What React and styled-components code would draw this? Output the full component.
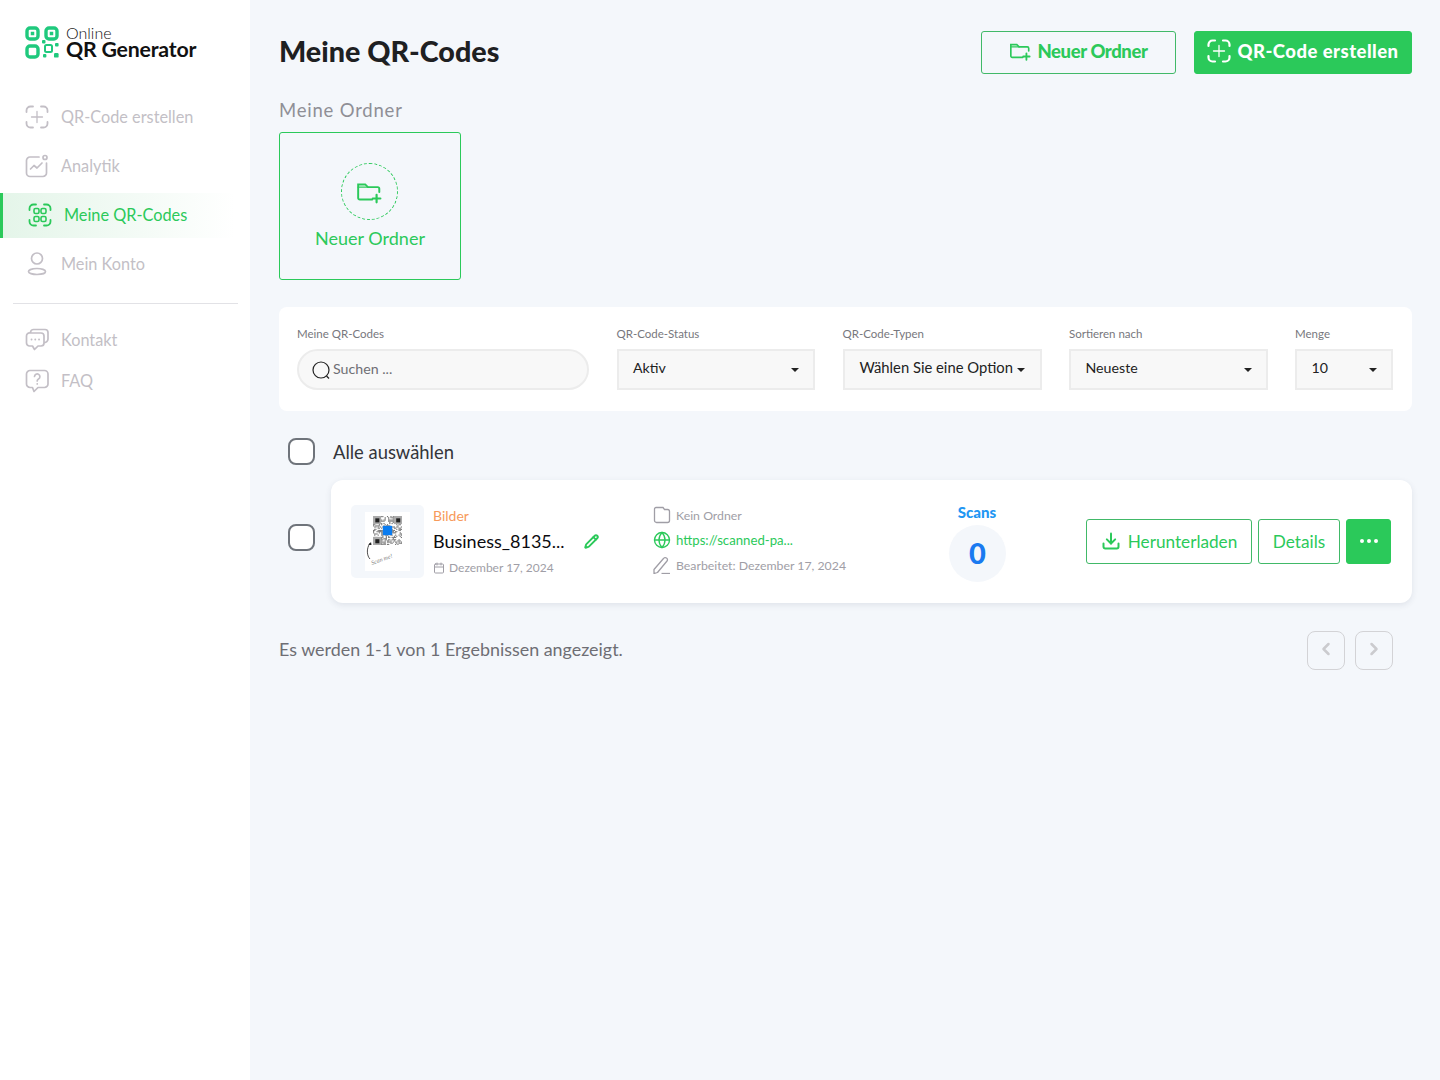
import React from 'react'
import styled, { createGlobalStyle } from 'styled-components'
import { Globe, Download, Pencil, Calendar, MoreHorizontal, ChevronLeft, ChevronRight } from 'lucide-react'

const green = '#2bc95a'
const muted = '#c3bfc6'

const Global = createGlobalStyle`
  html, body { margin: 0; padding: 0; background: #f4f7fb; }
  body { font-family: "Lato", "Noto Sans", sans-serif; }
  * { box-sizing: border-box; }
`

const Page = styled.div`
  display: flex;
  min-height: 1080px;
`
const Sidebar = styled.aside`
  width: 250px;
  flex-shrink: 0;
  background: #fff;
  padding-top: 24px;
`
const LogoRow = styled.div`
  display: flex;
  align-items: center;
  gap: 7px;
  padding-left: 25px;
  height: 36px;
  margin-bottom: 35px;
`
const LogoText = styled.div`
  display: flex;
  flex-direction: column;
  color: #111;
  span:first-child { font-size: 16px; line-height: 13px; font-weight: 300; }
  span:last-child { font-size: 21.3px; line-height: 18px; margin-top: 1px; font-weight: 700; letter-spacing: -0.2px; white-space: nowrap; }
`
const NavItem = styled.div`
  display: flex;
  align-items: center;
  height: 45px;
  margin-bottom: ${p => p.$tight ? '-4px' : '4px'};
  width: ${p => p.$active ? '235px' : '100%'};
  gap: 12px;
  padding-left: 25px;
  padding-bottom: ${p => p.$tight ? '0' : '2px'};
  font-size: 16.3px;
  color: ${p => p.$active ? green : muted};
  border-left: ${p => p.$active ? `3px solid ${green}` : 'none'};
  background: ${p => p.$active ? 'linear-gradient(90deg, #e4f5e9, #ffffff)' : 'transparent'};
`
const Divider = styled.hr`
  border: none;
  border-top: 1px solid #e2e2e6;
  margin: 16px 12px 13px 13px;
`
const Main = styled.main`
  flex: 1;
  padding: 31px 28px 0 29px;
  min-width: 0;
`
const Header = styled.header`
  display: flex;
  align-items: center;
  height: 43px;
  gap: 18px;
`
const Title = styled.h1`
  margin: 0 auto 4px 0;
  font-size: 28.7px;
  font-weight: 900;
  color: #1e2022;
`
const HeadButton = styled.button`
  display: flex;
  align-items: center;
  justify-content: center;
  gap: 6px;
  height: 43px;
  width: ${p => p.$w}px;
  padding: 0 0 3px;
  font: 900 18.5px "Lato", sans-serif;
  letter-spacing: ${p => p.$solid ? '0.47px' : '-0.4px'};
  border-radius: 3px;
  border: 1px solid ${p => p.$solid ? green : '#41b968'};
  background: ${p => p.$solid ? green : 'transparent'};
  color: ${p => p.$solid ? '#fff' : green};
`
const SectionTitle = styled.div`
  margin-top: 24px;
  font-size: 18.5px;
  letter-spacing: 0.8px;
  color: #8f8f96;
  line-height: 24px;
`
const FolderCard = styled.div`
  margin-top: 10px;
  width: 182px;
  height: 148px;
  border: 1px solid ${green};
  border-radius: 3px;
  display: flex;
  flex-direction: column;
  align-items: center;
  padding-top: 30px;
  color: ${green};
  font-size: 18px;
`
const DashedCircle = styled.div`
  width: 57px;
  height: 57px;
  margin-left: -2px;
  border-radius: 50%;
  border: 1px dashed ${green};
  display: flex;
  align-items: center;
  justify-content: center;
  margin-bottom: 7px;
`
const FilterPanel = styled.section`
  margin-top: 27px;
  height: 104px;
  background: #fff;
  border-radius: 8px;
  padding: 18px 0 0 18px;
  display: flex;
  gap: 27.5px;
`
const Field = styled.div`
  width: ${p => p.$w}px;
  flex-shrink: 0;
`
const FieldLabel = styled.div`
  font-size: 11.5px;
  line-height: 18px;
  height: 24px;
  color: #77777d;
`
const SearchBox = styled.div`
  height: 41px;
  border: 2px solid #ececec;
  border-radius: 21px;
  background: #f8f8f8;
  display: flex;
  align-items: center;
  gap: 2px;
  padding: 0 0 0 12px;
  font-size: 14.2px;
  color: #6f6f75;
`
const SearchLabel = styled.span`
  margin-top: -2px;
`
const SelectBox = styled.div`
  height: 41px;
  border: 2px solid #ececec;
  background: #f8f8f8;
  display: flex;
  align-items: center;
  justify-content: ${p => p.$tight ? 'flex-start' : 'space-between'};
  gap: 4px;
  padding: 0 ${p => p.$tight ? '0' : '14px'} 5px ${p => p.$tight ? '15px' : '14.5px'};
  font-size: ${p => p.$tight ? '14.8px' : '14.2px'};
  color: #222;
  white-space: nowrap;
`
const Caret = styled.i`
  display: block;
  width: 0;
  height: 0;
  margin-top: 6px;
  border-left: 4px solid transparent;
  border-right: 4px solid transparent;
  border-top: 4px solid #222;
`
const Check = styled.div`
  width: 27px;
  height: 27px;
  flex-shrink: 0;
  margin-bottom: ${p => p.$lift ? '8px' : '0'};
  border: 2px solid #6f747b;
  border-radius: 8px;
  background: #fff;
`
const SelectRow = styled.div`
  margin-top: 27px;
  padding-left: 9px;
  display: flex;
  align-items: center;
  gap: 18px;
  height: 27px;
  font-size: 18.4px;
  color: #33353a;
`
const Row = styled.div`
  margin-top: 15px;
  display: flex;
  align-items: center;
  padding-left: 9px;
  gap: 16px;
`
const QrCard = styled.article`
  flex: 1;
  height: 123px;
  background: #fff;
  border-radius: 12px;
  box-shadow: 0 2px 6px rgba(40, 50, 80, 0.1);
  display: flex;
  align-items: center;
  padding: 0 21px 0 20px;
`
const Thumb = styled.div`
  width: 73px;
  height: 73px;
  border-radius: 5px;
  background: #f4f7fb;
  display: flex;
  justify-content: center;
  align-items: center;
  flex-shrink: 0;
`
const Info = styled.div`
  width: 220px;
  margin: 0 0 1px 9px;
  flex-shrink: 0;
`
const Kind = styled.div`
  font-size: 14px;
  line-height: 18px;
  color: #f79a5b;
`
const NameRow = styled.div`
  display: flex;
  align-items: center;
  gap: 19px;
  margin-top: 4px;
  font-size: 18px;
  line-height: 24px;
  color: #0b0b0f;
`
const DateRow = styled.div`
  display: flex;
  align-items: center;
  gap: 4px;
  margin-top: 7px;
  font-size: 12px;
  color: #a09ea6;
`
const Meta = styled.div`
  width: 270px;
  flex-shrink: 0;
  display: flex;
  flex-direction: column;
  gap: 7px;
  margin-top: -3px;
`
const MetaLine = styled.div`
  display: flex;
  align-items: center;
  gap: 5px;
  height: 18px;
  font-size: ${p => p.$link ? '13.2px' : '12.3px'};
  color: ${p => p.$link ? green : '#a09ea6'};
`
const Scans = styled.div`
  width: 108px;
  flex-shrink: 0;
  display: flex;
  flex-direction: column;
  align-items: center;
  gap: 4px;
  margin-top: 1px;
  font-size: 15px;
  font-weight: 900;
  color: #2196f3;
`
const ScanCount = styled.div`
  width: 57px;
  height: 57px;
  border-radius: 50%;
  background: #f4f7fb;
  display: flex;
  align-items: center;
  justify-content: center;
  padding: 0 0 2px 1px;
  font-size: 29px;
  color: #1a7af0;
`
const Actions = styled.div`
  margin-left: auto;
  display: flex;
  gap: 6px;
`
const ActionButton = styled.button`
  height: 45px;
  width: ${p => p.$w}px;
  padding: 0 0 1px;
  display: flex;
  align-items: center;
  justify-content: center;
  gap: 7px;
  font: 400 17.2px "Lato", sans-serif;
  color: ${p => p.$solid ? '#fff' : green};
  border: 1px solid ${p => p.$solid ? green : '#41b968'};
  background: ${p => p.$solid ? green : '#fff'};
  border-radius: 3px;
`
const Footer = styled.div`
  margin-top: 28px;
  display: flex;
  align-items: center;
  justify-content: space-between;
  padding-right: 19px;
  height: 39px;
  font-size: 17.9px;
  color: #6e6e74;
`
const FooterText = styled.span`
  margin-top: -4px;
`
const Pager = styled.div`
  display: flex;
  gap: 10px;
`
const PageButton = styled.button`
  width: 38px;
  height: 39px;
  padding: 0 0 3px;
  border: 1px solid #d3d3d6;
  border-radius: 8px;
  background: transparent;
  color: #cbcbce;
  display: flex;
  align-items: center;
  justify-content: center;
`

const Logo = () => (
  <svg width="34" height="33" viewBox="0 0 34 33" fill="none" stroke="#1fc97d">
    <rect x="2" y="2" width="11" height="11" rx="3" strokeWidth="3.4" />
    <rect x="21" y="2" width="11" height="11" rx="3" strokeWidth="3.4" />
    <rect x="2" y="20" width="11" height="11" rx="3" strokeWidth="3.4" />
    <rect x="6" y="6" width="3" height="3" fill="#1fc97d" strokeWidth="0.5" />
    <rect x="25" y="6" width="3" height="3" fill="#1fc97d" strokeWidth="0.5" />
    <rect x="17" y="14" width="3.5" height="3.5" rx="1" fill="#1fc97d" stroke="none" />
    <rect x="20" y="19" width="7" height="7" rx="1.5" strokeWidth="2" />
    <rect x="30" y="17" width="3.6" height="3.6" rx="1" fill="#1fc97d" stroke="none" />
    <rect x="29" y="27" width="4.6" height="4.6" rx="1.2" fill="#1fc97d" stroke="none" />
    <rect x="18" y="28" width="3.4" height="3.4" rx="1" fill="#1fc97d" stroke="none" />
  </svg>
)
const Brackets = ({ sw = 1.8 }) => (
  <path strokeWidth={sw} strokeLinecap="round" d="M1.500 7V5.500A4 4 0 0 1 5.500 1.500H8M16 1.500H18.500A4 4 0 0 1 22.500 5.500V7M22.500 17V18.500A4 4 0 0 1 18.500 22.500H16M8 22.500H5.500A4 4 0 0 1 1.500 18.500V17" />
)
const CreateIcon = ({ color = muted, size = 24 }) => (
  <svg width={size} height={size} viewBox="0 0 24 24" fill="none" stroke={color}>
    <Brackets sw={color === '#fff' ? 2.2 : 1.8} />
    <path strokeWidth="1.300" strokeLinecap="round" d="M12 6.500V17.500M6.500 12H17.500" />
  </svg>
)
const ChartIcon = () => (
  <svg width="24" height="24" viewBox="0 0 24 24" fill="none" stroke={muted} strokeWidth="1.700" strokeLinecap="round" strokeLinejoin="round">
    <path d="M14 3H5A3.500 3.500 0 0 0 1.500 6.500V19A3.500 3.500 0 0 0 5 22.500H18A3.500 3.500 0 0 0 21.500 19V9" />
    <circle cx="20" cy="3.500" r="2" />
    <path d="M5.500 15L9 11.500L12 14L17 9" />
  </svg>
)
const CodesIcon = () => (
  <svg width="24" height="24" viewBox="0 0 24 24" fill="none" stroke={green}>
    <Brackets />
    <rect x="6" y="5.500" width="5" height="5" rx="1.500" strokeWidth="1.600" />
    <rect x="13" y="5.500" width="5" height="5" rx="1.500" strokeWidth="1.600" />
    <rect x="6" y="13.500" width="5" height="5" rx="1.500" strokeWidth="1.600" />
    <rect x="13" y="13.500" width="5" height="5" rx="1.500" strokeWidth="1.600" />
  </svg>
)
const UserIcon = () => (
  <svg width="24" height="24" viewBox="0 0 24 24" fill="none" stroke={muted} strokeWidth="1.700">
    <circle cx="12" cy="6.500" r="5.500" />
    <ellipse cx="12" cy="19.500" rx="8.500" ry="3" />
  </svg>
)
const ChatsIcon = () => (
  <svg width="24" height="24" viewBox="0 0 24 24" fill="none" stroke={muted} strokeWidth="1.700" strokeLinejoin="round">
    <path d="M5 5H16A3 3 0 0 1 19 8V15A3 3 0 0 1 16 18H13L9.500 21.500L7.500 18H4.500A3 3 0 0 1 1.500 15V8A3 3 0 0 1 5 5Z" />
    <path d="M5.500 5V4.500A3 3 0 0 1 8.500 1.500H20A3 3 0 0 1 23 4.500V11A3.500 3.500 0 0 1 19 14.500" />
    <path strokeWidth="1.800" strokeLinecap="round" d="M6.500 11.500H6.600M10.200 11.500H10.300M14 11.500H14.100" />
  </svg>
)
const HelpIcon = () => (
  <svg width="24" height="24" viewBox="0 0 24 24" fill="none" stroke={muted} strokeWidth="1.700" strokeLinejoin="round" strokeLinecap="round">
    <path d="M5 1.500H19.500A3.500 3.500 0 0 1 23 5V15A3.500 3.500 0 0 1 19.500 18.500H13L9 22.500L7.500 18.500H5A3.500 3.500 0 0 1 1.500 15V5A3.500 3.500 0 0 1 5 1.500Z" />
    <path d="M9.500 7.500A2.700 2.700 0 1 1 13.500 10C12.500 10.600 12.200 11.200 12.200 12" />
    <path d="M12.200 14.900H12.300" />
  </svg>
)
const FolderPlus = ({ size = 22 }) => (
  <svg width={size} height={size} viewBox="0 0 24 24" fill="none" stroke={green} strokeWidth="1.800" strokeLinecap="round">
    <path d="M15 19H3.500A1.500 1.500 0 0 1 2 17.500V5H8.500L11 7.500H20A1.500 1.500 0 0 1 21.500 9V12" />
    <path d="M2 7.500H11" strokeWidth="1.200" />
    <path strokeWidth="2" d="M19 14.500V21.500M15.500 18H22.500" />
  </svg>
)
const SearchIcon = () => (
  <svg width="20" height="20" viewBox="0 0 20 20" fill="none" stroke="#222" strokeWidth="1.200">
    <circle cx="10" cy="10" r="8" />
    <path d="M15.500 16L18 18.500" />
  </svg>
)
const FolderFlat = () => (
  <svg width="18" height="18" viewBox="0 0 18 18" fill="none" stroke="#a09ea6" strokeWidth="1.300">
    <path d="M3 1.500H10L11.500 3.500H14.500A2 2 0 0 1 16.500 5.500V14.500A2 2 0 0 1 14.500 16.500H3.500A2 2 0 0 1 1.500 14.500V3A1.500 1.500 0 0 1 3 1.500Z" />
  </svg>
)
const EditLine = () => (
  <svg width="18" height="18" viewBox="0 0 18 18" fill="none" stroke="#a09ea6" strokeWidth="1.300" strokeLinejoin="round">
    <path d="M1 13.500L10.500 2.500A2 2 0 0 1 13.500 2A2 2 0 0 1 14 5L4.500 16.500L1 17.500Z" />
    <path d="M8.500 17.500H17" />
  </svg>
)

// pseudo random modules, the picture is too small to read anyway
const modules = []
for (let y = 0; y < 25; y++) {
  for (let x = 0; x < 25; x++) {
    const n = Math.sin(x * 12.9898 + y * 78.233) * 43758.5453
    if (n - Math.floor(n) < 0.5) modules.push([x, y])
  }
}
const Finder = ({ x, y }) => (
  <g>
    <rect x={x} y={y} width="7" height="7" fill="#aaa" />
    <rect x={x + 2} y={y + 2} width="3.500" height="3.500" fill="#222" />
  </g>
)
const QrPicture = () => (
  <svg width="45" height="59" viewBox="0 0 45 59">
    <rect width="45" height="59" fill="#fff" />
    <g transform="translate(8 4) scale(1.16)">
      {modules.map(([x, y]) => <rect key={`${x}-${y}`} x={x} y={y} width="1" height="1" fill="#777" />)}
      <Finder x={0} y={0} />
      <Finder x={18} y={0} />
      <Finder x={0} y={18} />
      <rect x="8.500" y="8.500" width="8" height="8" fill="#0a7cf0" />
    </g>
    <path d="M5 31C1 37 2 44 5 47" fill="none" stroke="#222" strokeWidth="0.800" />
    <path d="M3.500 33L6 30L6.500 33Z" fill="#222" />
    <text x="7" y="53" fontSize="6" fontStyle="italic" fontFamily="Liberation Serif, serif" fill="#777" transform="rotate(-20 7 53)">Scan me!</text>
  </svg>
)

const App = () => (
  <>
    <Global />
    <Page>
      <Sidebar>
        <LogoRow>
          <Logo />
          <LogoText>
            <span>Online</span>
            <span>QR Generator</span>
          </LogoText>
        </LogoRow>
        <NavItem><CreateIcon />QR-Code erstellen</NavItem>
        <NavItem><ChartIcon />Analytik</NavItem>
        <NavItem $active><CodesIcon />Meine QR-Codes</NavItem>
        <NavItem><UserIcon />Mein Konto</NavItem>
        <Divider />
        <NavItem $tight><ChatsIcon />Kontakt</NavItem>
        <NavItem $tight><HelpIcon />FAQ</NavItem>
      </Sidebar>
      <Main>
        <Header>
          <Title>Meine QR-Codes</Title>
          <HeadButton $w={195}><FolderPlus />Neuer Ordner</HeadButton>
          <HeadButton $w={218} $solid><CreateIcon color="#fff" />QR-Code erstellen</HeadButton>
        </Header>
        <SectionTitle>Meine Ordner</SectionTitle>
        <FolderCard>
          <DashedCircle><FolderPlus size={26} /></DashedCircle>
          Neuer Ordner
        </FolderCard>
        <FilterPanel>
          <Field $w={292}>
            <FieldLabel>Meine QR-Codes</FieldLabel>
            <SearchBox><SearchIcon /><SearchLabel>Suchen ...</SearchLabel></SearchBox>
          </Field>
          <Field $w={198.5}>
            <FieldLabel>QR-Code-Status</FieldLabel>
            <SelectBox>Aktiv<Caret /></SelectBox>
          </Field>
          <Field $w={199}>
            <FieldLabel>QR-Code-Typen</FieldLabel>
            <SelectBox $tight>Wählen Sie eine Option<Caret /></SelectBox>
          </Field>
          <Field $w={198.5}>
            <FieldLabel>Sortieren nach</FieldLabel>
            <SelectBox>Neueste<Caret /></SelectBox>
          </Field>
          <Field $w={98}>
            <FieldLabel>Menge</FieldLabel>
            <SelectBox>10<Caret /></SelectBox>
          </Field>
        </FilterPanel>
        <SelectRow><Check />Alle auswählen</SelectRow>
        <Row>
          <Check $lift />
          <QrCard>
            <Thumb><QrPicture /></Thumb>
            <Info>
              <Kind>Bilder</Kind>
              <NameRow>Business_8135...<Pencil size={15} color={green} strokeWidth={3} /></NameRow>
              <DateRow><Calendar size={12} color="#a09ea6" />Dezember 17, 2024</DateRow>
            </Info>
            <Meta>
              <MetaLine><FolderFlat />Kein Ordner</MetaLine>
              <MetaLine $link><Globe size={18} color={green} strokeWidth={1.8} />https://scanned-pa...</MetaLine>
              <MetaLine><EditLine />Bearbeitet: Dezember 17, 2024</MetaLine>
            </Meta>
            <Scans>
              Scans
              <ScanCount>0</ScanCount>
            </Scans>
            <Actions>
              <ActionButton $w={166}><Download size={20} strokeWidth={2.4} />Herunterladen</ActionButton>
              <ActionButton $w={82}>Details</ActionButton>
              <ActionButton $w={45} $solid><MoreHorizontal size={24} /></ActionButton>
            </Actions>
          </QrCard>
        </Row>
        <Footer>
          <FooterText>Es werden 1-1 von 1 Ergebnissen angezeigt.</FooterText>
          <Pager>
            <PageButton><ChevronLeft size={20} strokeWidth={3} /></PageButton>
            <PageButton><ChevronRight size={20} strokeWidth={3} /></PageButton>
          </Pager>
        </Footer>
      </Main>
    </Page>
  </>
)

export default App
